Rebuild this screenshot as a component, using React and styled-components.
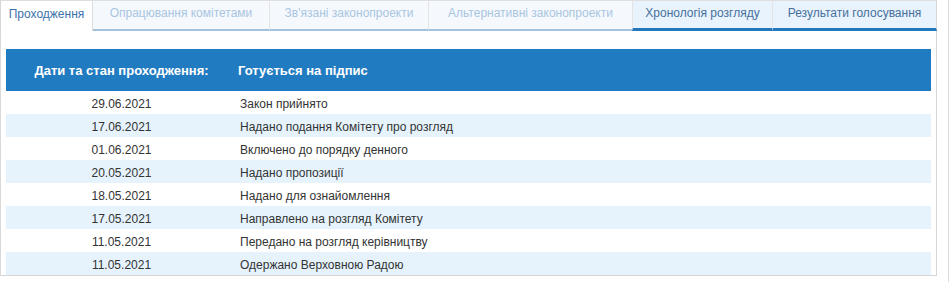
import React from "react";
import styled, { createGlobalStyle, css } from "styled-components";

const Global = createGlobalStyle`
  html, body { margin: 0; padding: 0; background: #fff; }
  body { font-family: "Liberation Sans", Arial, sans-serif; }
`;

const Page = styled.div`
  width: 948px;
  height: 282px;
  border-right: 1px solid #dcdcdc;
  box-sizing: content-box;
`;

const Frame = styled.div`
  width: 937px;
`;

const Tabs = styled.div`
  display: grid;
  grid-template-columns: 93px 176px 159px 204px 140px 165px;
  height: 31px;
`;

const Tab = styled.div`
  box-sizing: border-box;
  display: flex;
  align-items: center;
  justify-content: center;
  font-size: 12px;
  white-space: nowrap;
  padding-bottom: 4px;
  border-top: 1px solid #dedede;
  border-left: 1px solid #e4e4e4;
  ${(p) =>
    p.$kind === "active" &&
    css`
      background: #fff;
      color: #3c72ab;
      border-left: 1px solid #d9d9d9;
      border-right: 1px solid #dcdcdc;
      padding-bottom: 5px;
    `}
  ${(p) =>
    p.$kind === "muted" &&
    css`
      background: #f5f9fe;
      color: #a9c5e0;
      border-bottom: 2px solid #a2c2de;
    `}
  ${(p) =>
    p.$kind === "blue" &&
    css`
      background: #e8f3fd;
      color: #46709b;
      border-bottom: 3px solid #2277bd;
      padding-bottom: 3px;
    `}
  ${(p) => p.$last && css`border-right: 1px solid #d6d6d6;`}
  ${(p) => p.$first && css`border-left: 1px solid #d6d6d6;`}
  ${(p) => p.$afterActive && css`border-left: none;`}
`;

const Panel = styled.div`
  box-sizing: border-box;
  height: 245px;
  padding: 18px 5px 0;
  border-left: 1px solid #d9d9d9;
  border-right: 1px solid #d6d6d6;
  border-bottom: 1px solid #d6d6d6;
`;

const Table = styled.div`
  display: grid;
  grid-template-columns: 231px 1fr;
`;

const HeadCell = styled.div`
  background: #217bc1;
  color: #fff;
  font-weight: bold;
  font-size: 13px;
  height: 42px;
  display: flex;
  align-items: center;
  justify-content: ${(p) => (p.$center ? "center" : "flex-start")};
  padding-left: ${(p) => (p.$center ? "0" : "1px")};
`;

const Cell = styled.div`
  box-sizing: border-box;
  height: 23px;
  padding-top: 2px;
  display: flex;
  align-items: center;
  font-size: 12px;
  color: #333;
  background: ${(p) => (p.$alt ? "#e6f3fd" : "#fff")};
  justify-content: ${(p) => (p.$center ? "center" : "flex-start")};
  padding-left: ${(p) => (p.$center ? "0" : "3px")};
`;

const tabs = [
  { label: "Проходження", kind: "active" },
  { label: "Опрацювання комітетами", kind: "muted" },
  { label: "Зв'язані законопроекти", kind: "muted" },
  { label: "Альтернативні законопроекти", kind: "muted" },
  { label: "Хронологія розгляду", kind: "blue" },
  { label: "Результати голосування", kind: "blue" },
];

const rows = [
  ["29.06.2021", "Закон прийнято"],
  ["17.06.2021", "Надано подання Комітету про розгляд"],
  ["01.06.2021", "Включено до порядку денного"],
  ["20.05.2021", "Надано пропозиції"],
  ["18.05.2021", "Надано для ознайомлення"],
  ["17.05.2021", "Направлено на розгляд Комітету"],
  ["11.05.2021", "Передано на розгляд керівництву"],
  ["11.05.2021", "Одержано Верховною Радою"],
];

export default function App() {
  return (
    <>
      <Global />
      <Page>
        <Frame>
          <Tabs>
            {tabs.map((t, i) => (
              <Tab
                key={t.label}
                $kind={t.kind}
                $first={i === 0}
                $last={i === tabs.length - 1}
                $afterActive={i === 1}
              >
                {t.label}
              </Tab>
            ))}
          </Tabs>
          <Panel>
            <Table>
              <HeadCell $center>Дати та стан проходження:</HeadCell>
              <HeadCell>Готується на підпис</HeadCell>
              {rows.map(([d, s], i) => (
                <React.Fragment key={i}>
                  <Cell $center $alt={i % 2 === 1}>{d}</Cell>
                  <Cell $alt={i % 2 === 1}>{s}</Cell>
                </React.Fragment>
              ))}
            </Table>
          </Panel>
        </Frame>
      </Page>
    </>
  );
}
